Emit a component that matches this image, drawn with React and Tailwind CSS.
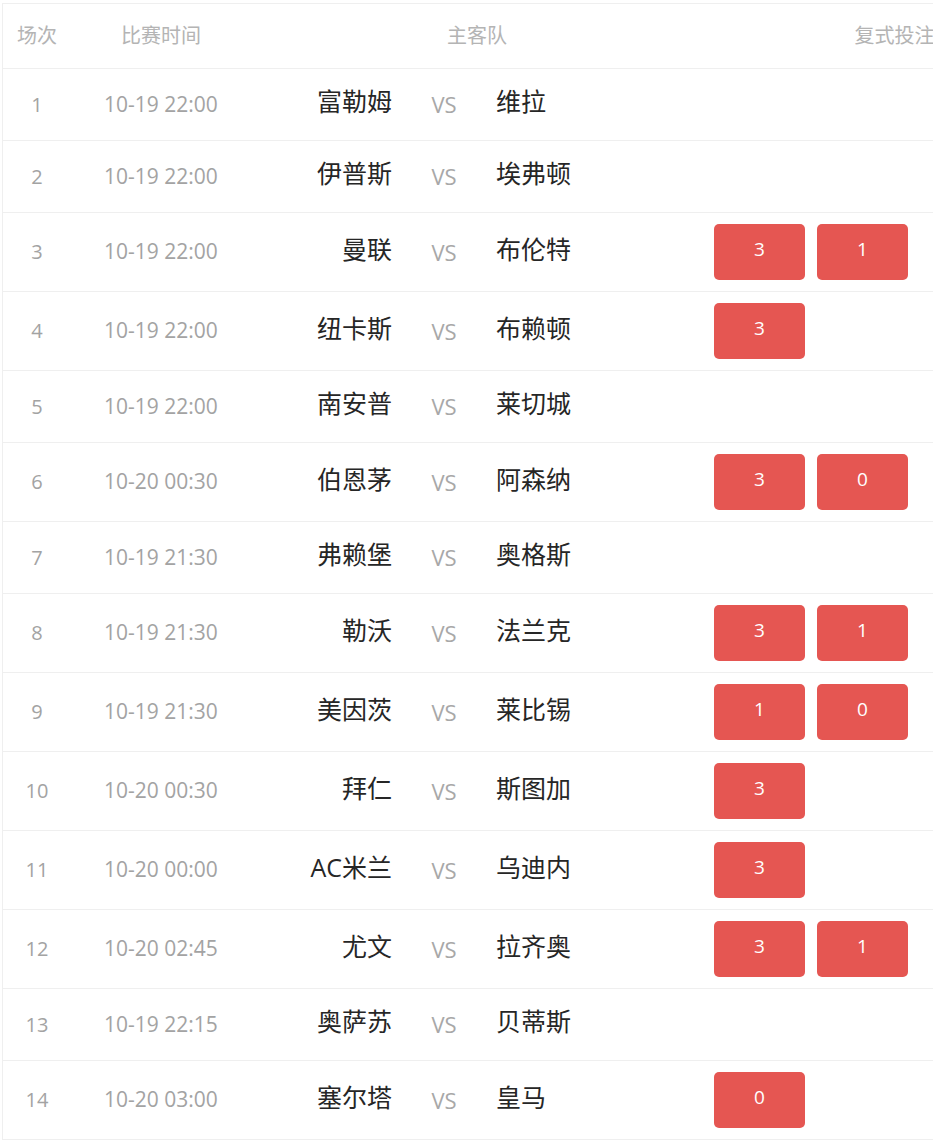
import React from 'react';

const matches = [
  { no: 1, time: '10-19 22:00', home: '富勒姆', away: '维拉', picks: [] },
  { no: 2, time: '10-19 22:00', home: '伊普斯', away: '埃弗顿', picks: [] },
  { no: 3, time: '10-19 22:00', home: '曼联', away: '布伦特', picks: ['3', '1'] },
  { no: 4, time: '10-19 22:00', home: '纽卡斯', away: '布赖顿', picks: ['3'] },
  { no: 5, time: '10-19 22:00', home: '南安普', away: '莱切城', picks: [] },
  { no: 6, time: '10-20 00:30', home: '伯恩茅', away: '阿森纳', picks: ['3', '0'] },
  { no: 7, time: '10-19 21:30', home: '弗赖堡', away: '奥格斯', picks: [] },
  { no: 8, time: '10-19 21:30', home: '勒沃', away: '法兰克', picks: ['3', '1'] },
  { no: 9, time: '10-19 21:30', home: '美因茨', away: '莱比锡', picks: ['1', '0'] },
  { no: 10, time: '10-20 00:30', home: '拜仁', away: '斯图加', picks: ['3'] },
  { no: 11, time: '10-20 00:00', home: 'AC米兰', away: '乌迪内', picks: ['3'] },
  { no: 12, time: '10-20 02:45', home: '尤文', away: '拉齐奥', picks: ['3', '1'] },
  { no: 13, time: '10-19 22:15', home: '奥萨苏', away: '贝蒂斯', picks: [] },
  { no: 14, time: '10-20 03:00', home: '塞尔塔', away: '皇马', picks: ['0'] },
];

const font = { fontFamily: '"Open Sans", "Noto Sans CJK SC", sans-serif' };

const App = () => {
  return (
    <div className="w-[933px] h-[1141px] overflow-hidden bg-white pt-[3px] pl-[2px]" style={font}>
      <div className="w-[1084px] border-t border-l border-[#efefef]">
        {/* Header */}
        <div className="flex h-[65px] items-center border-b border-[#efefef] text-[20px] text-[#b4b4b4]">
          <div className="w-[68px] text-center">场次</div>
          <div className="w-[180px] text-center">比赛时间</div>
          <div className="w-[452px] text-center">主客队</div>
          <div className="flex-1 text-center">复式投注</div>
        </div>

        {/* Rows */}
        {matches.map((m) => (
          <div
            key={m.no}
            className={`flex items-center border-b border-[#efefef] ${m.picks.length ? 'h-[79px]' : 'h-[72px]'}`}
          >
            <div className="w-[68px] text-center text-[20px] text-[#a3a3a3]">{m.no}</div>
            <div className="w-[180px] text-center text-[21px] text-[#a3a3a3]">{m.time}</div>
            <div className="flex w-[452px] items-center">
              <div className="w-[141px] pb-[5px] text-right text-[25px] text-[#262626]">{m.home}</div>
              <div className="w-[104px] text-center text-[22px] text-[#a8a8a8]">VS</div>
              <div className="flex-1 pb-[5px] text-[25px] text-[#262626]">{m.away}</div>
            </div>
            <div className="flex flex-1 gap-3 pl-[11px]">
              {m.picks.map((p, i) => (
                <div
                  key={i}
                  className="flex h-[56px] w-[91px] items-center justify-center rounded-[5px] bg-[#e55652] pb-[6px] text-[19px] text-white"
                >
                  {p}
                </div>
              ))}
            </div>
          </div>
        ))}
      </div>
    </div>
  );
};

export default App;
